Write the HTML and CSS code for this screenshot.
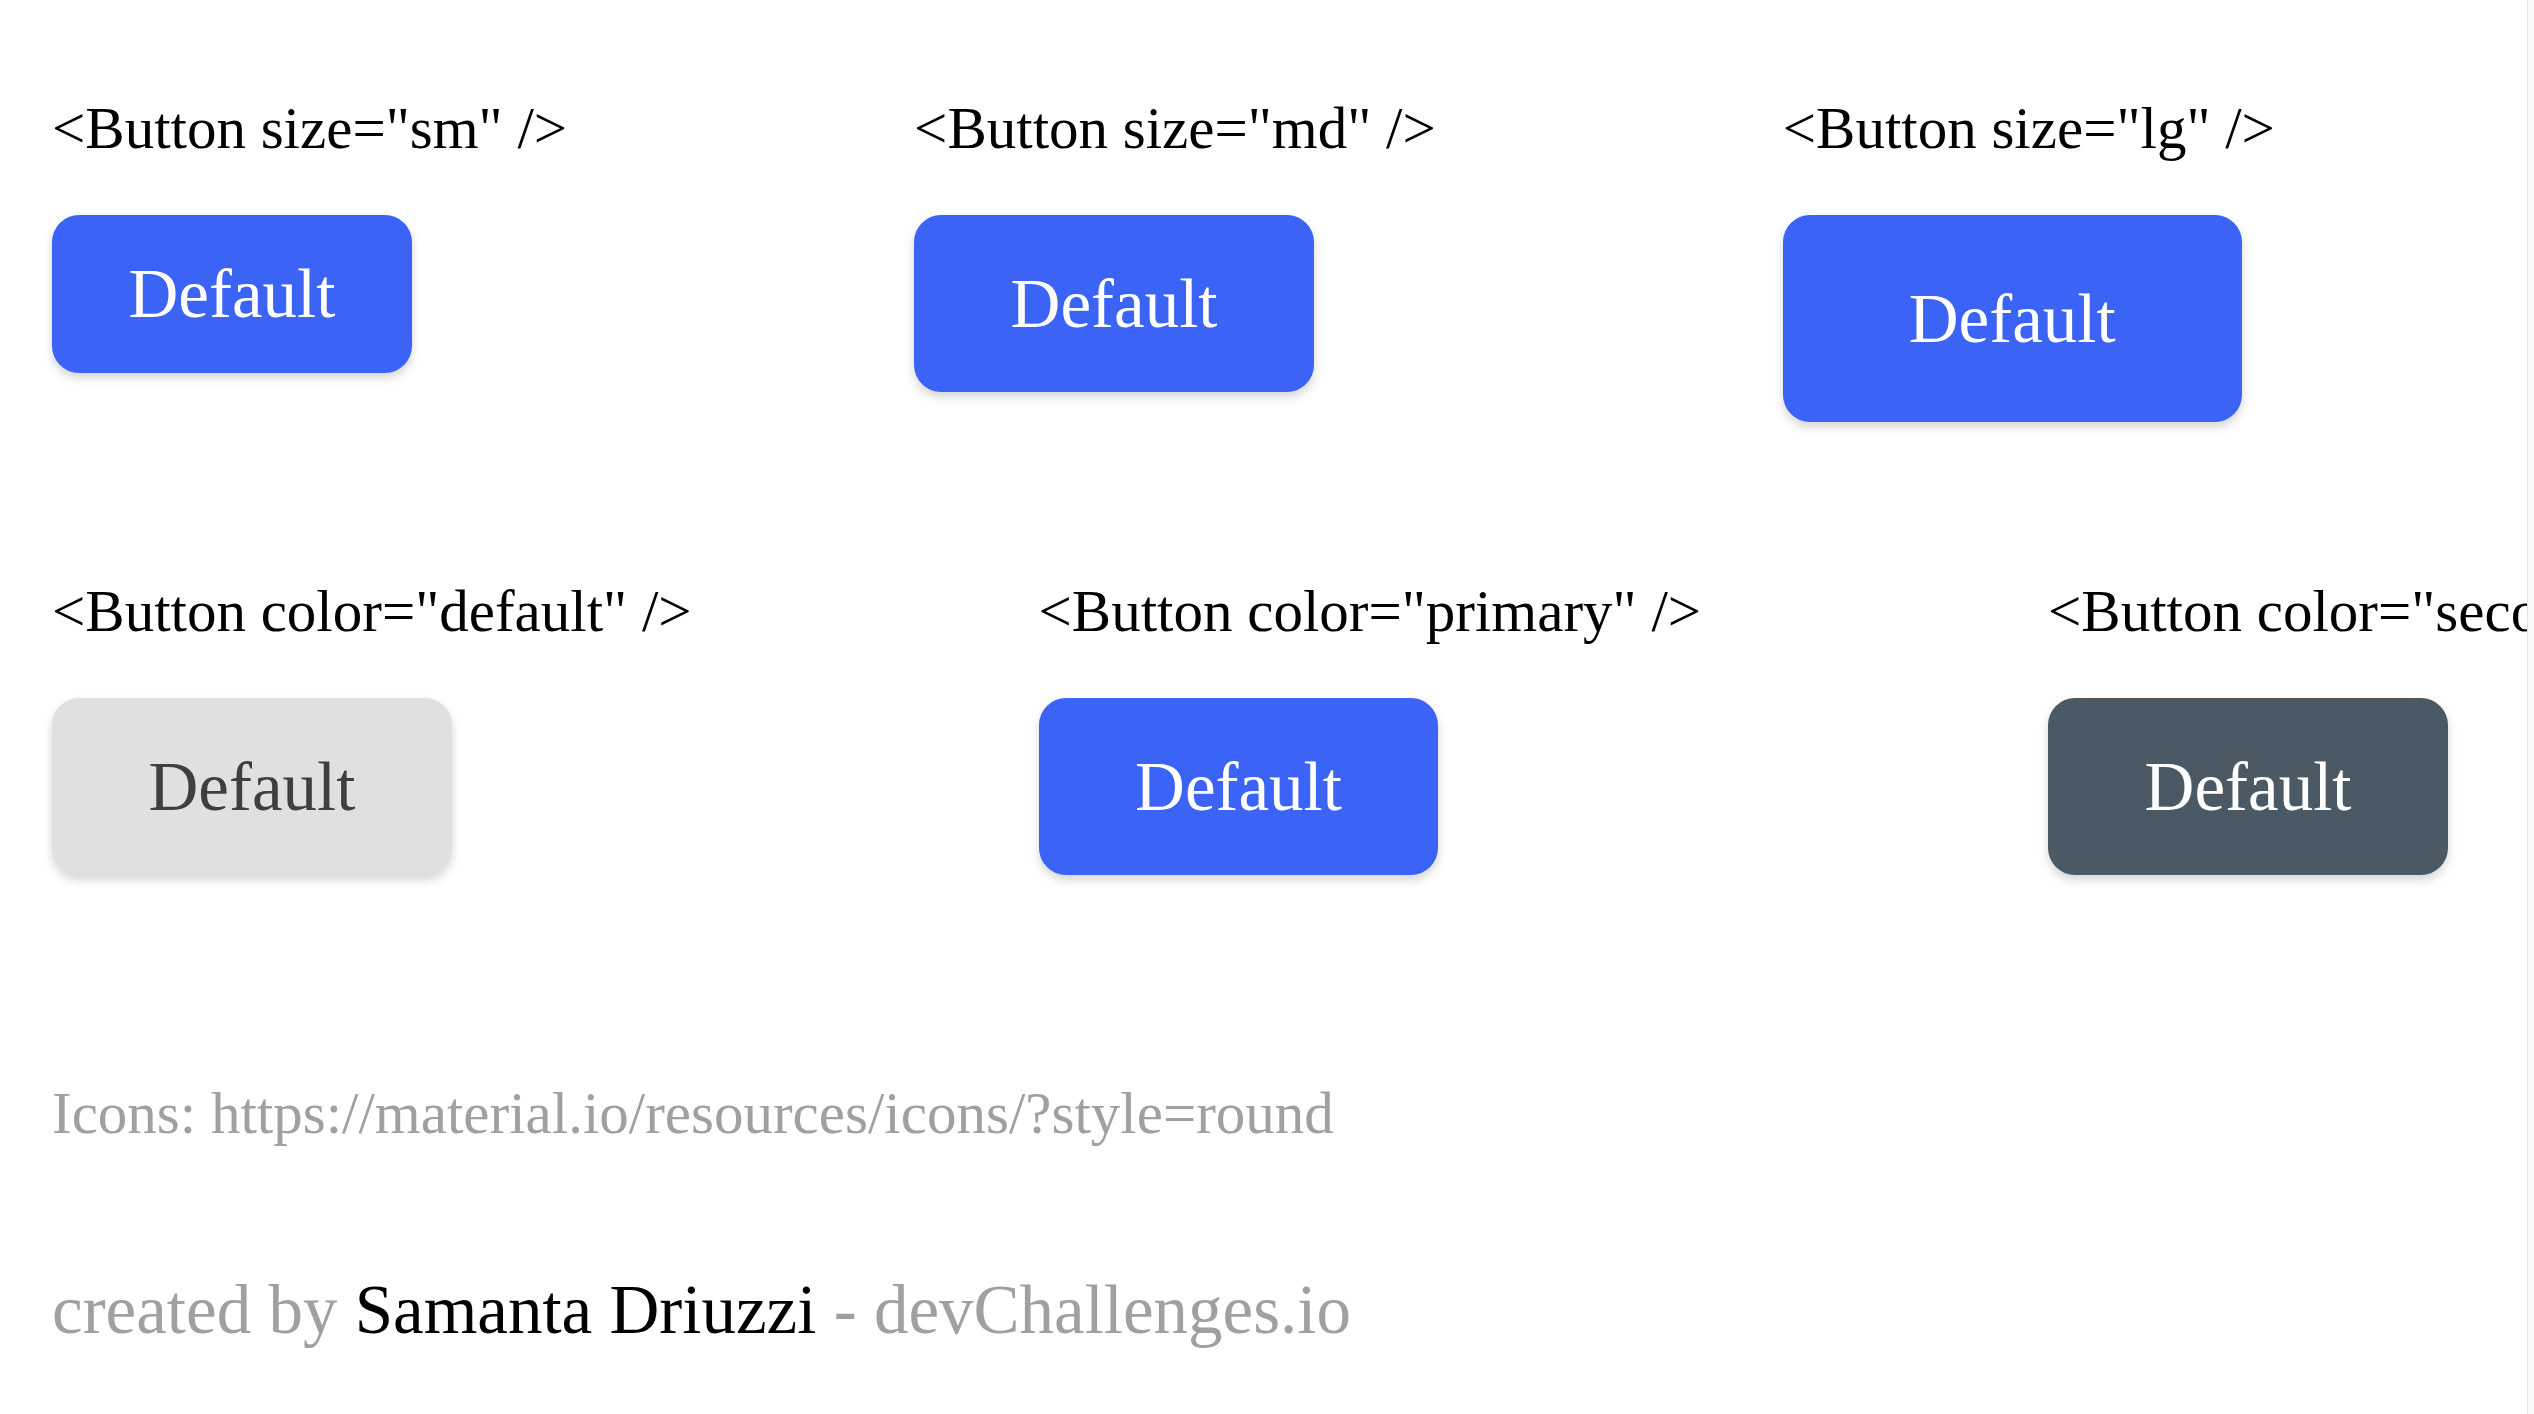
FILE: index.html
```html
<!DOCTYPE html>
<html lang="en">
<head>
<meta charset="utf-8">
<title>Buttons</title>
<link rel="stylesheet" href="styles.css">
</head>
<body>
<div class="page">
  <main class="main">
    <section class="row">
      <div class="demo">
        <p class="label">&lt;Button size="sm" /&gt;</p>
        <button class="btn btn-sm btn-primary">Default</button>
      </div>
      <div class="demo">
        <p class="label">&lt;Button size="md" /&gt;</p>
        <button class="btn btn-md btn-primary">Default</button>
      </div>
      <div class="demo">
        <p class="label">&lt;Button size="lg" /&gt;</p>
        <button class="btn btn-lg btn-primary">Default</button>
      </div>
    </section>
    <section class="row row-colors">
      <div class="demo">
        <p class="label">&lt;Button color="default" /&gt;</p>
        <button class="btn btn-md btn-default">Default</button>
      </div>
      <div class="demo">
        <p class="label">&lt;Button color="primary" /&gt;</p>
        <button class="btn btn-md btn-primary">Default</button>
      </div>
      <div class="demo">
        <p class="label">&lt;Button color="secondary" /&gt;</p>
        <button class="btn btn-md btn-secondary">Default</button>
      </div>
    </section>
    <p class="icons-credit">Icons: https://material.io/resources/icons/?style=round</p>
    <p class="credit">created by <span class="author">Samanta Driuzzi</span> - devChallenges.io</p>
  </main>
  <div class="scroll-track"></div>
</div>
</body>
</html>
```

FILE: styles.css
```css
html, body {
  margin: 0;
  padding: 0;
  background: #ffffff;
}

body {
  font-family: "Liberation Serif", "Times New Roman", serif;
  color: #000000;
  overflow: hidden;
}

.page {
  display: flex;
  width: 2534px;
  height: 1414px;
}

.main {
  flex: 1;
  min-width: 0;
  overflow: hidden;
  padding: 94px 0 0 52px;
  box-sizing: border-box;
}

.row {
  display: flex;
  flex-wrap: nowrap;
  gap: 347px;
  align-items: flex-start;
}

.row-colors {
  margin-top: 155px;
}

.demo {
  display: flex;
  flex-direction: column;
  align-items: flex-start;
  gap: 53px;
  flex-shrink: 0;
}

.label {
  margin: 0;
  font-size: 59px;
  line-height: 68px;
  white-space: nowrap;
}

.btn {
  border: none;
  font-family: "Liberation Serif", "Times New Roman", serif;
  font-size: 69px;
  line-height: 80px;
  border-radius: 27px;
  box-shadow: 0 5px 10px rgba(51, 51, 51, 0.2);
  cursor: pointer;
  white-space: nowrap;
}

.btn-sm {
  padding: 39px 76.5px;
}

.btn-md {
  padding: 48.5px 96.5px;
}

.btn-lg {
  padding: 63.5px 126px;
}

.btn-primary {
  background: #3b63f6;
  color: #ffffff;
}

.btn-default {
  background: #e0e0e0;
  color: #3f3f3f;
}

.btn-secondary {
  background: #4a5964;
  color: #ffffff;
}

.icons-credit {
  margin: 204px 0 0;
  font-size: 59px;
  line-height: 68px;
  color: #a0a0a0;
  white-space: nowrap;
}

.credit {
  margin: 123px 0 0;
  font-size: 69px;
  line-height: 80px;
  color: #a0a0a0;
  white-space: nowrap;
}

.author {
  color: #000000;
}

.scroll-track {
  width: 6px;
  flex-shrink: 0;
  border-left: 1px solid #e4e4e4;
  background: #fafafa;
}
```
